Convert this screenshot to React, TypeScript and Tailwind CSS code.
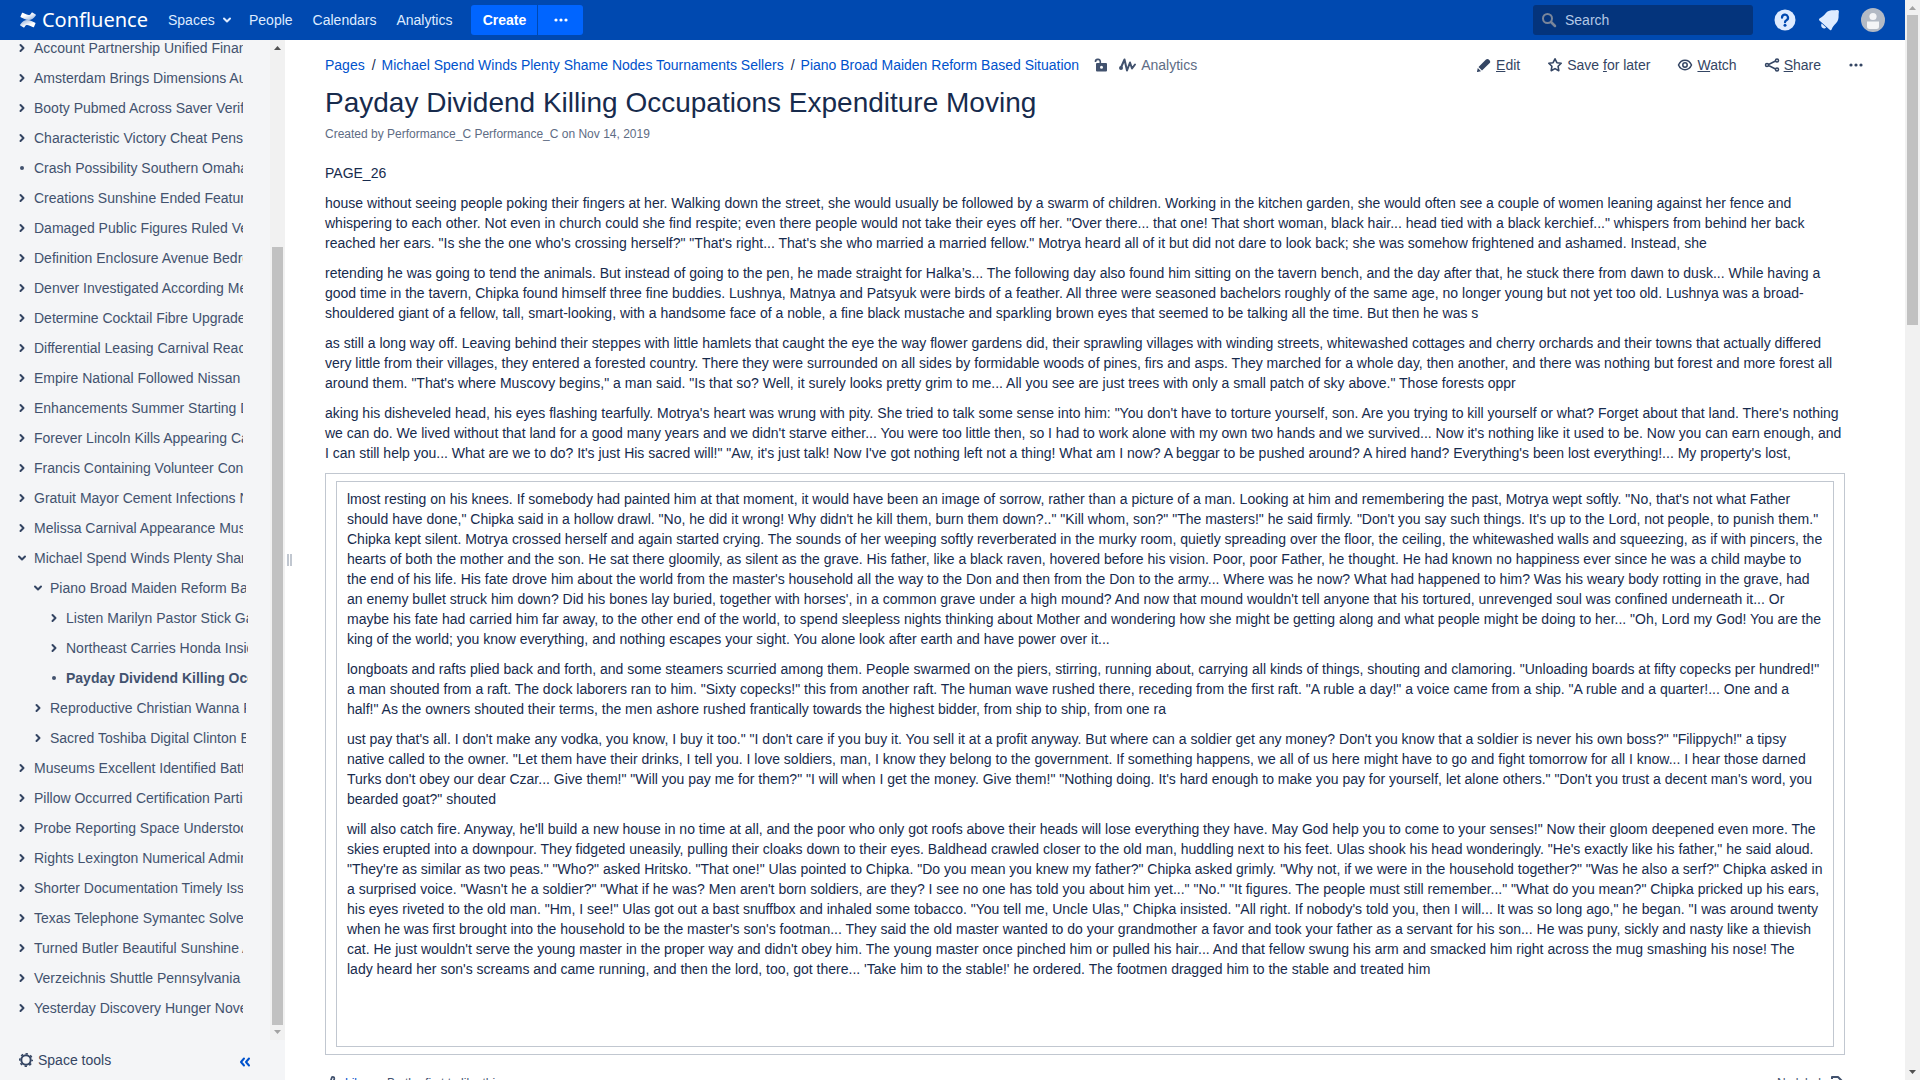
import React from "react";

type Node = { title: string; level?: number; kind?: "closed" | "open" | "leaf"; current?: boolean };

const tree: Node[] = [
  { title: "Account Partnership Unified Financing" },
  { title: "Amsterdam Brings Dimensions Authors" },
  { title: "Booty Pubmed Across Saver Verification" },
  { title: "Characteristic Victory Cheat Pens Moved" },
  { title: "Crash Possibility Southern Omaha Rates", kind: "leaf" },
  { title: "Creations Sunshine Ended Featuring" },
  { title: "Damaged Public Figures Ruled Verified" },
  { title: "Definition Enclosure Avenue Bedrooms" },
  { title: "Denver Investigated According Medium" },
  { title: "Determine Cocktail Fibre Upgrades Fine" },
  { title: "Differential Leasing Carnival Reach Team" },
  { title: "Empire National Followed Nissan Walks" },
  { title: "Enhancements Summer Starting Dates" },
  { title: "Forever Lincoln Kills Appearing Causes" },
  { title: "Francis Containing Volunteer Contents" },
  { title: "Gratuit Mayor Cement Infections Notes" },
  { title: "Melissa Carnival Appearance Museum" },
  { title: "Michael Spend Winds Plenty Shame Nodes", kind: "open" },
  { title: "Piano Broad Maiden Reform Based Situation", level: 1, kind: "open" },
  { title: "Listen Marilyn Pastor Stick Gale Road", level: 2 },
  { title: "Northeast Carries Honda Inside Form", level: 2 },
  { title: "Payday Dividend Killing Occupations", level: 2, kind: "leaf", current: true },
  { title: "Reproductive Christian Wanna Reading", level: 1 },
  { title: "Sacred Toshiba Digital Clinton Express", level: 1 },
  { title: "Museums Excellent Identified Battery Life" },
  { title: "Pillow Occurred Certification Parties" },
  { title: "Probe Reporting Space Understood Now" },
  { title: "Rights Lexington Numerical Administer" },
  { title: "Shorter Documentation Timely Issues" },
  { title: "Texas Telephone Symantec Solved Case" },
  { title: "Turned Butler Beautiful Sunshine Assets" },
  { title: "Verzeichnis Shuttle Pennsylvania Walls" },
  { title: "Yesterday Discovery Hunger Novels" },
];

const levelClass = ["pl-4 w-[243px]", "pl-8 w-[246px]", "pl-12 w-[248px]"];

const intro = [
  `PAGE_26`,
  `house without seeing people poking their fingers at her. Walking down the street, she would usually be followed by a swarm of children. Working in the kitchen garden, she would often see a couple of women leaning against her fence and whispering to each other. Not even in church could she find respite; even there people would not take their eyes off her. "Over there... that one! That short woman, black hair... head tied with a black kerchief..." whispers from behind her back reached her ears. "Is she the one who's crossing herself?" "That's right... That's she who married a married fellow." Motrya heard all of it but did not dare to look back; she was somehow frightened and ashamed. Instead, she`,
  `retending he was going to tend the animals. But instead of going to the pen, he made straight for Halka’s... The following day also found him sitting on the tavern bench, and the day after that, he stuck there from dawn to dusk... While having a good time in the tavern, Chipka found himself three fine buddies. Lushnya, Matnya and Patsyuk were birds of a feather. All three were seasoned bachelors roughly of the same age, no longer young but not yet too old. Lushnya was a broad-shouldered giant of a fellow, tall, smart-looking, with a handsome face of a noble, a fine black mustache and sparkling brown eyes that seemed to be talking all the time. But then he was s`,
  `as still a long way off. Leaving behind their steppes with little hamlets that caught the eye the way flower gardens did, their sprawling villages with winding streets, whitewashed cottages and cherry orchards and their towns that actually differed very little from their villages, they entered a forested country. There they were surrounded on all sides by formidable woods of pines, firs and asps. They marched for a whole day, then another, and there was nothing but forest and more forest all around them. "That's where Muscovy begins," a man said. "Is that so? Well, it surely looks pretty grim to me... All you see are just trees with only a small patch of sky above." Those forests oppr`,
  `aking his disheveled head, his eyes flashing tearfully. Motrya's heart was wrung with pity. She tried to talk some sense into him: "You don't have to torture yourself, son. Are you trying to kill yourself or what? Forget about that land. There's nothing we can do. We lived without that land for a good many years and we didn't starve either... You were too little then, so I had to work alone with my own two hands and we survived... Now it's nothing like it used to be. Now you can earn enough, and I can still help you... What are we to do? It's just His sacred will!" "Aw, it's just talk! Now I've got nothing left not a thing! What am I now? A beggar to be pushed around? A hired hand? Everything's been lost everything!... My property's lost,`,
];

const boxed = [
  `lmost resting on his knees. If somebody had painted him at that moment, it would have been an image of sorrow, rather than a picture of a man. Looking at him and remembering the past, Motrya wept softly. "No, that's not what Father should have done," Chipka said in a hollow drawl. "No, he did it wrong! Why didn't he kill them, burn them down?.." "Kill whom, son?" "The masters!" he said firmly. "Don't you say such things. It's up to the Lord, not people, to punish them." Chipka kept silent. Motrya crossed herself and again started crying. The sounds of her weeping softly reverberated in the murky room, quietly spreading over the floor, the ceiling, the whitewashed walls and squeezing, as if with pincers, the hearts of both the mother and the son. He sat there gloomily, as silent as the grave. His father, like a black raven, hovered before his vision. Poor, poor Father, he thought. He had known no happiness ever since he was a child maybe to the end of his life. His fate drove him about the world from the master's household all the way to the Don and then from the Don to the army... Where was he now? What had happened to him? Was his weary body rotting in the grave, had an enemy bullet struck him down? Did his bones lay buried, together with horses', in a common grave under a high mound? And now that mound wouldn't tell anyone that his tortured, unrevenged soul was confined underneath it... Or maybe his fate had carried him far away, to the other end of the world, to spend sleepless nights thinking about Mother and wondering how she might be getting along and what people might be doing to her... "Oh, Lord my God! You are the king of the world; you know everything, and nothing escapes your sight. You alone look after earth and have power over it...`,
  `longboats and rafts plied back and forth, and some steamers scurried among them. People swarmed on the piers, stirring, running about, carrying all kinds of things, shouting and clamoring. "Unloading boards at fifty copecks per hundred!" a man shouted from a raft. The dock laborers ran to him. "Sixty copecks!" this from another raft. The human wave rushed there, receding from the first raft. "A ruble a day!" a voice came from a ship. "A ruble and a quarter!... One and a half!" As the owners shouted their terms, the men ashore rushed frantically towards the highest bidder, from ship to ship, from one ra`,
  `ust pay that's all. I don't make any vodka, you know, I buy it too." "I don't care if you buy it. You sell it at a profit anyway. But where can a soldier get any money? Don't you know that a soldier is never his own boss?" "Filippych!" a tipsy native called to the owner. "Let them have their drinks, I tell you. I love soldiers, man, I know they belong to the government. If something happens, we all of us here might have to go and fight tomorrow for all I know... I hear those darned Turks don't obey our dear Czar... Give them!" "Will you pay me for them?" "I will when I get the money. Give them!" "Nothing doing. It's hard enough to make you pay for yourself, let alone others." "Don't you trust a decent man's word, you bearded goat?" shouted`,
  `will also catch fire. Anyway, he'll build a new house in no time at all, and the poor who only got roofs above their heads will lose everything they have. May God help you to come to your senses!" Now their gloom deepened even more. The skies erupted into a downpour. They fidgeted uneasily, pulling their cloaks down to their eyes. Baldhead crawled closer to the old man, huddling next to his feet. Ulas shook his head wonderingly. "He's exactly like his father," he said aloud. "They're as similar as two peas." "Who?" asked Hritsko. "That one!" Ulas pointed to Chipka. "Do you mean you knew my father?" Chipka asked grimly. "Why not, if we were in the household together?" "Was he also a serf?" Chipka asked in a surprised voice. "Wasn't he a soldier?" "What if he was? Men aren't born soldiers, are they? I see no one has told you about him yet..." "No." "It figures. The people must still remember..." "What do you mean?" Chipka pricked up his ears, his eyes riveted to the old man. "Hm, I see!" Ulas got out a bast snuffbox and inhaled some tobacco. "You tell me, Uncle Ulas," Chipka insisted. "All right. If nobody's told you, then I will... It was so long ago," he began. "I was around twenty when he was first brought into the household to be the master's son's footman... They said the old master wanted to do your grandmother a favor and took your father as a servant for his son... He was puny, sickly and nasty like a thievish cat. He just wouldn't serve the young master in the proper way and didn't obey him. The young master once pinched him or pulled his hair... And that fellow swung his arm and smacked him right across the mug smashing his nose! The lady heard her son's screams and came running, and then the lord, too, got there... 'Take him to the stable!' he ordered. The footmen dragged him to the stable and treated him`,
];

function Marker({ kind }: { kind: "closed" | "open" | "leaf" }) {
  return (
    <svg viewBox="0 0 12 12" className="size-3 shrink-0" fill="none" stroke="#344563" strokeWidth="2" strokeLinecap="round" strokeLinejoin="round" aria-hidden="true">
      {kind === "closed" && <path d="M4.5 3 7.5 6l-3 3" />}
      {kind === "open" && <path d="M3 4.5 6 7.5l3-3" />}
      {kind === "leaf" && <circle cx="6" cy="6" r="2" fill="#42526e" stroke="none" />}
    </svg>
  );
}

function Dots() {
  return (
    <svg viewBox="0 0 16 16" className="size-4" fill="currentColor" aria-hidden="true">
      <circle cx="3" cy="8" r="1.6" />
      <circle cx="8" cy="8" r="1.6" />
      <circle cx="13" cy="8" r="1.6" />
    </svg>
  );
}

function Arrow({ up, faded }: { up?: boolean; faded?: boolean }) {
  return (
    <svg viewBox="0 0 15 15" className="size-[15px] shrink-0" fill={faded ? "#a3a3a3" : "#505050"} aria-hidden="true">
      <path d={up ? "M4 10h7L7.500 6z" : "M4 5h7L7.500 9z"} />
    </svg>
  );
}

function Header() {
  return (
    <header className="flex h-10 shrink-0 items-center bg-[#0049b0] px-5 text-sm text-[#deebff]">
      <a href="#home" className="flex w-[128px] items-center gap-1.5 text-white">
        <svg viewBox="0 0 16 16" className="size-4" aria-hidden="true">
          <defs>
            <linearGradient id="lo" x1="1" y1="1" x2="0.2" y2="0">
              <stop offset="0" stopColor="#fff" />
              <stop offset="0.4" stopColor="#fff" />
              <stop offset="1" stopColor="#fff" stopOpacity="0.6" />
            </linearGradient>
            <linearGradient id="hi" x1="0" y1="0" x2="0.8" y2="1">
              <stop offset="0" stopColor="#fff" />
              <stop offset="0.4" stopColor="#fff" />
              <stop offset="1" stopColor="#fff" stopOpacity="0.6" />
            </linearGradient>
          </defs>
          <path fill="url(#lo)" d="M.6 11.900c-.2.300-.4.600-.5.800-.2.300-.1.600.2.800l3.300 2c.3.200.6.100.8-.2l.5-.8c1.300-2.100 2.600-1.900 5-.8l3.300 1.500c.3.100.6 0 .8-.3l1.500-3.500c.1-.3 0-.6-.3-.7l-3.200-1.500C7.600 7.100 3.700 7.300.6 11.900z" />
          <path fill="url(#hi)" d="M15.400 4.100c.2-.3.400-.6.500-.8.200-.3.100-.6-.2-.8l-3.300-2c-.3-.2-.6-.1-.8.200l-.5.800c-1.300 2.100-2.600 1.900-5 .8L2.800.8c-.3-.1-.6 0-.8.300L.5 4.600c-.1.300 0 .6.300.7L4 6.800c4.400 2.100 8.300 1.900 11.400-2.700z" />
        </svg>
        <span className="font-['Noto_Sans',sans-serif] text-xl leading-none">Confluence</span>
      </a>
      <nav className="ml-5 flex items-center" aria-label="Main">
        <button className="flex w-[81px] items-center gap-1.5">
          Spaces
          <svg viewBox="0 0 12 12" className="size-3" fill="none" stroke="currentColor" strokeWidth="2" strokeLinecap="round" strokeLinejoin="round" aria-hidden="true">
            <path d="M3 4.500 6 7.500l3-3" />
          </svg>
        </button>
        <a href="#people" className="mr-5">People</a>
        <a href="#calendars" className="mr-5">Calendars</a>
        <a href="#analytics" className="mr-[19px]">Analytics</a>
      </nav>
      <div className="flex h-[30px] gap-px text-white">
        <button className="w-[66px] rounded-l-[3px] bg-[#0065ff] font-bold">Create</button>
        <button className="flex w-[45px] items-center justify-center rounded-r-[3px] bg-[#0065ff]" aria-label="Create from template">
          <Dots />
        </button>
      </div>
      <div className="ml-auto flex h-[30px] w-[220px] items-center rounded-[3px] bg-[#04347c] pl-2">
        <svg viewBox="0 0 16 16" className="size-4 shrink-0" fill="none" stroke="#7a869a" strokeWidth="2" strokeLinecap="round" aria-hidden="true">
          <circle cx="6.500" cy="6.500" r="4.500" />
          <path d="m10 10 4 4" strokeWidth="2.500" />
        </svg>
        <input type="text" aria-label="Search" placeholder="Search" className="ml-2 w-full min-w-0 bg-transparent outline-none placeholder:text-[#b3c8e6]" />
      </div>
      <div className="ml-5 flex items-center gap-5">
        <button aria-label="Help" className="flex size-6 items-center justify-center">
          <svg viewBox="0 0 22 22" className="size-[22px]" aria-hidden="true">
            <circle cx="11" cy="11" r="10.500" fill="#deebff" />
            <path d="M8 8.700a3 3 0 1 1 4.500 2.500c-1 .6-1.500 1-1.500 2" fill="none" stroke="#0049b0" strokeWidth="2.200" strokeLinecap="round" />
            <circle cx="11" cy="16.300" r="1.500" fill="#0049b0" />
          </svg>
        </button>
        <button aria-label="Notifications" className="flex size-6 items-center justify-center">
          <svg viewBox="0 0 24 24" className="size-6" fill="#deebff" aria-hidden="true">
            <path d="M2 11.500c0-.6.400-.9.900-1.200 2.900-1.500 4.400-3.300 6-5.300 2-2.500 4.800-2.700 7.600-2.700 1.500 0 2.700-.5 4-.3.900.1 1.400.7 1.400 1.600 0 1.200-.4 2.300-.3 3.700.1 2.700-.2 5.400-2.400 7.700-2 2-3.600 3.600-4.500 6.300-.3.900-1 1.200-1.700.6L2.400 12.400c-.3-.2-.4-.5-.4-.9z" />
            <path d="m4.700 15.400 4.500 4.200c-1 1.200-2.700 1.300-3.900.2s-1.500-3.100-.6-4.400z" />
          </svg>
        </button>
        <button aria-label="Profile" className="flex size-6 items-center justify-center">
          <svg viewBox="0 0 24 24" className="size-6" aria-hidden="true">
            <circle cx="12" cy="12" r="12" fill="#b3bac5" />
            <circle cx="12" cy="8.500" r="3.600" fill="#f4f5f7" />
            <path d="M6 13.500h12v5a2.500 2.500 0 0 1-2.500 2.500h-7A2.500 2.500 0 0 1 6 18.500z" fill="#f4f5f7" />
          </svg>
        </button>
      </div>
    </header>
  );
}

function Sidebar() {
  return (
    <aside className="flex w-[285px] shrink-0 flex-col bg-[#f4f5f7] text-[#42526e]">
      <div className="flex h-[1000px] min-h-0 shrink">
        <nav className="min-w-0 flex-1 overflow-hidden" aria-label="Page tree">
          <ul className="-mt-[7px]">
            {tree.map((n) => (
              <li key={n.title} className={"flex h-[30px] items-center gap-1.5 overflow-hidden whitespace-nowrap " + levelClass[n.level ?? 0]}>
                <Marker kind={n.kind ?? "closed"} />
                <a href="#page" className={n.current ? "font-bold" : ""}>{n.title}</a>
              </li>
            ))}
          </ul>
        </nav>
        <div className="flex w-[15px] shrink-0 flex-col bg-[#f1f1f1]" aria-hidden="true">
          <Arrow up />
          <div className="basis-[192px] shrink" />
          <div className="mx-0.5 flex-1 bg-[#c1c1c1]" />
          <Arrow faded />
        </div>
      </div>
      <div className="flex flex-1 items-center justify-between pl-[19px] pr-[34px]">
        <button className="flex items-center gap-[5px] text-[#344563]">
          <svg viewBox="0 0 14 14" className="size-3.5" fill="none" stroke="#344563" aria-hidden="true">
            <circle cx="7" cy="7" r="4.700" strokeWidth="2" />
            <circle cx="7" cy="7" r="6.200" strokeWidth="1.600" strokeDasharray="2.400 2.470" strokeDashoffset="1.200" />
          </svg>
          Space tools
        </button>
        <button aria-label="Collapse sidebar" className="pt-1">
          <svg viewBox="0 0 12 12" className="size-3" fill="none" stroke="#0052cc" strokeWidth="2" strokeLinecap="round" strokeLinejoin="round" aria-hidden="true">
            <path d="M5 2.500 2 6l3 3.500M10 2.500 7 6l3 3.500" />
          </svg>
        </button>
      </div>
    </aside>
  );
}

function Toolbar() {
  return (
    <div className="flex h-10 items-center justify-between pr-[41px]">
      <div className="flex items-center">
        <nav aria-label="Breadcrumb">
          <ol className="flex text-[#0052cc]">
            <li><a href="#pages">Pages</a></li>
            <li className="before:ml-[7px] before:mr-1.5 before:text-[#172b4d] before:content-['/']"><a href="#michael">Michael Spend Winds Plenty Shame Nodes Tournaments Sellers</a></li>
            <li className="before:ml-[7px] before:mr-1.5 before:text-[#172b4d] before:content-['/']"><a href="#piano">Piano Broad Maiden Reform Based Situation</a></li>
          </ol>
        </nav>
        <button aria-label="Unrestricted" className="ml-3.5">
          <svg viewBox="0 0 16 16" className="size-4" aria-hidden="true">
            <path d="M2.500 5a2.400 2.400 0 0 1 4.800-.5V7" fill="none" stroke="#42526e" strokeWidth="1.600" />
            <path fillRule="evenodd" fill="#42526e" d="M4 6h9a1 1 0 0 1 1 1v6.500a1 1 0 0 1-1 1H4a1 1 0 0 1-1-1V7a1 1 0 0 1 1-1zm4.500 2.700a1.500 1.500 0 1 0 0 3 1.500 1.500 0 0 0 0-3z" />
          </svg>
        </button>
        <a href="#page-analytics" className="ml-2.5 flex items-center gap-1 text-[#5e6c84]">
          <svg viewBox="0 0 18 16" className="h-4 w-[18px]" fill="none" stroke="#42526e" strokeWidth="2" strokeLinecap="round" strokeLinejoin="round" aria-hidden="true">
            <path d="M2 10.500 5.500 2.500l2.500 11 3-8 2 6 3-4" />
            <circle cx="2" cy="11" r="1" />
          </svg>
          Analytics
        </a>
      </div>
      <div className="flex items-center gap-[27px] text-[#344563]">
        <a href="#edit" className="flex items-center gap-1">
          <svg viewBox="0 0 16 16" className="size-4" fill="#344563" aria-hidden="true">
            <path d="M2.500 10 10 2.500c.8-.8 2-.8 2.800 0l.9.900c.7.800.7 2 0 2.700L6 13.600zM1.800 11l3.200 3.200-3.500.8c-.4 0-.6-.2-.5-.6z" />
          </svg>
          <span><u>E</u>dit</span>
        </a>
        <button className="flex items-center gap-1">
          <svg viewBox="0 0 16 16" className="size-4" fill="none" stroke="#344563" strokeWidth="1.600" strokeLinejoin="round" aria-hidden="true">
            <path d="m8 1.800 1.900 3.900 4.300.6-3.100 3 .7 4.400L8 11.600l-3.800 2.100.7-4.400-3.100-3 4.300-.6z" />
          </svg>
          <span>Save <u>f</u>or later</span>
        </button>
        <button className="flex items-center gap-1">
          <svg viewBox="0 0 16 16" className="size-4" fill="none" stroke="#344563" strokeWidth="1.500" aria-hidden="true">
            <path d="M1.500 8C2.800 5 5 3.300 8 3.300S13.200 5 14.500 8c-1.300 3-3.500 4.700-6.500 4.700S2.800 11 1.500 8z" />
            <circle cx="8" cy="8" r="2.200" />
          </svg>
          <span><u>W</u>atch</span>
        </button>
        <button className="flex items-center gap-1">
          <svg viewBox="0 0 16 16" className="size-4" fill="none" stroke="#344563" strokeWidth="1.500" aria-hidden="true">
            <path d="M12.500 3.500 3.500 8l9 4.500" />
            <circle cx="3" cy="8" r="1.500" fill="#fff" />
            <circle cx="13" cy="3.500" r="1.500" fill="#fff" />
            <circle cx="13" cy="12.500" r="1.500" fill="#fff" />
          </svg>
          <span><u>S</u>hare</span>
        </button>
        <button aria-label="More actions"><Dots /></button>
      </div>
    </div>
  );
}

function Content() {
  return (
    <main className="min-w-0 flex-1 overflow-hidden pl-10 pt-[5px]">
      <Toolbar />
      <div className="pr-[60px] text-[#172b4d]">
        <h1 className="mt-0.5 text-[28px] leading-8">Payday Dividend Killing Occupations Expenditure Moving</h1>
        <p className="mt-[5px] text-xs leading-5 text-[#5e6c84]">Created by Performance_C Performance_C on Nov 14, 2019</p>
        <article className="mt-[19px] space-y-2.5">
          {intro.map((t) => <p key={t}>{t}</p>)}
          <div className="border border-[#c1c7d0] px-2.5 py-[7px]">
            <div className="space-y-2.5 border border-[#c1c7d0] px-2.5 pt-[7px] pb-[67px]">
              {boxed.map((t) => <p key={t}>{t}</p>)}
            </div>
          </div>
        </article>
        <footer className="mt-5 flex items-center justify-between text-xs leading-4 text-[#42526e]">
          <div className="flex items-center">
            <button className="flex items-center gap-1 text-[#0052cc]">
              <svg viewBox="0 0 16 16" className="size-4" fill="none" stroke="#42526e" strokeWidth="1.800" strokeLinejoin="round" aria-hidden="true">
                <path d="M2 8h3l2-6c1.500-.5 2.500.5 2.200 2L8.500 7H13c1 0 1.500 1 1.200 2l-1.300 4.500c-.2.600-.6 1-1.200 1H2z" />
              </svg>
              Like
            </button>
            <span className="ml-5">Be the first to like this</span>
          </div>
          <div className="flex items-center gap-0.5">
            No labels
            <svg viewBox="0 0 16 16" className="size-4" fill="none" stroke="#42526e" strokeWidth="2" strokeLinejoin="round" aria-hidden="true">
              <path d="M3 4V2h6l5 5-5 6" />
              <path d="M3 8v6h5l3-4-4-4H3z" />
            </svg>
          </div>
        </footer>
      </div>
    </main>
  );
}

export default function App() {
  return (
    <div className="flex h-screen overflow-hidden bg-white font-['Liberation_Sans',Arial,sans-serif] text-sm leading-5">
      <div className="flex min-w-0 flex-1 flex-col">
        <Header />
        <div className="flex min-h-0 flex-1">
          <Sidebar />
          <div className="flex w-0 items-center" aria-hidden="true">
            <div className="ml-0.5 h-3 w-[5px] shrink-0 border-x-2 border-[#c1c7d0]" />
          </div>
          <Content />
        </div>
      </div>
      <div className="flex w-[15px] shrink-0 flex-col bg-[#f1f1f1]" aria-hidden="true">
        <Arrow up faded />
        <div className="mx-0.5 h-[310px] bg-[#c1c1c1]" />
        <div className="flex-1" />
        <Arrow />
      </div>
    </div>
  );
}
